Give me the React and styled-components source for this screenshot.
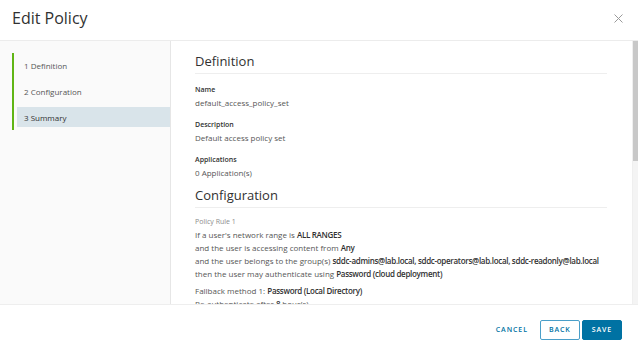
import React from 'react'
import styled, { createGlobalStyle } from 'styled-components'

const GlobalStyle = createGlobalStyle`
  html, body {
    margin: 0;
    padding: 0;
    background: #ffffff;
  }
  body {
    font-family: "Open Sans", "Liberation Sans", sans-serif;
    color: #565656;
  }
`

const Modal = styled.div`
  width: 638px;
  height: 354px;
  display: flex;
  flex-direction: column;
  background: #fff;
  overflow: hidden;
`

const Header = styled.div`
  height: 40px;
  flex: none;
  display: flex;
  align-items: center;
  justify-content: space-between;
  padding: 0 12px 0 12px;
  border-bottom: 1px solid #ececec;
  box-sizing: content-box;
`

const Title = styled.h1`
  margin: 0;
  font-size: 16px;
  font-weight: 400;
  color: #313131;
  line-height: 20px;
  padding-bottom: 4px;
`

const CloseButton = styled.button`
  border: 0;
  background: none;
  padding: 0;
  width: 16px;
  height: 16px;
  display: flex;
  align-items: center;
  justify-content: center;
  margin-bottom: 4px;
  cursor: pointer;
`

const Body = styled.div`
  flex: 1;
  display: flex;
  min-height: 0;
  border-bottom: 1px solid #eeeeee;
`

const Sidebar = styled.nav`
  width: 171px;
  flex: none;
  background: #fafafa;
  border-right: 1px solid #e6e6e6;
  padding-top: 12px;
  padding-left: 12px;
  box-sizing: border-box;
`

const StepList = styled.ul`
  list-style: none;
  margin: 0;
  padding: 2px 0 3px 3px;
  border-left: 2px solid #60b515;
  display: flex;
  flex-direction: column;
  gap: 6px;
`

const Step = styled.li`
  height: 20px;
  display: flex;
  align-items: center;
  padding-left: 7px;
  font-size: 8px;
  color: ${p => (p.$active ? '#313131' : '#565656')};
  background: ${p => (p.$active ? '#d9e4ea' : 'transparent')};
`

const Content = styled.div`
  flex: 1;
  overflow: hidden;
  padding: 11px 25px 0 24px;
`

const SectionTitle = styled.h2`
  margin: ${p => (p.$first ? '0' : '7px')} 0 0 0;
  font-size: 13px;
  line-height: 18px;
  font-weight: 400;
  color: #313131;
  padding-bottom: 3px;
  border-bottom: 1px solid #eeeeee;
`

const Field = styled.div`
  margin-top: ${p => p.$gap || 9}px;
`

const Label = styled.div`
  font-size: 7px;
  line-height: 13px;
  font-weight: 600;
  color: #313131;
`

const Value = styled.div`
  font-size: 8px;
  line-height: 13px;
  color: #565656;
`

const RuleTitle = styled.div`
  margin-top: 7px;
  font-size: 7px;
  line-height: 13px;
  color: #8c8c8c;
`

const Line = styled.div`
  font-size: 8px;
  line-height: 13px;
  color: #565656;
  white-space: nowrap;
  margin-top: ${p => p.$gap || 0}px;

  b {
    font-weight: 600;
    letter-spacing: -0.3px;
    color: #313131;
  }
`

const ScrollTrack = styled.div`
  width: 6px;
  flex: none;
  background: #f4f4f4;
  border-left: 1px solid #efefef;
  box-sizing: border-box;
`

const ScrollThumb = styled.div`
  height: 120px;
  background: #c8c8c8;
`

const Footer = styled.div`
  flex: none;
  height: 49px;
  display: flex;
  align-items: center;
  justify-content: flex-end;
  padding-right: 16px;
  gap: 2px;
`

const Button = styled.button`
  height: 20px;
  padding: 0 ${p => p.$pad || 9}px;
  margin-right: ${p => p.$after || 0}px;
  font-family: "Open Sans", "Liberation Sans", sans-serif;
  font-size: 7px;
  font-weight: 600;
  letter-spacing: 0.9px;
  border-radius: 2px;
  cursor: pointer;
  border: 1px solid ${p => (p.$variant === 'flat' ? 'transparent' : '#0072a3')};
  color: ${p => (p.$variant === 'primary' ? '#ffffff' : '#0072a3')};
  background: ${p => (p.$variant === 'primary' ? '#0072a3' : '#ffffff')};
  ${p => p.$variant === 'outline' && 'border-color: #4a9fc9;'}
`

const steps = ['1 Definition', '2 Configuration', '3 Summary']

export default function App() {
  return (
    <>
      <GlobalStyle />
      <Modal>
        <Header>
          <Title>Edit Policy</Title>
          <CloseButton aria-label="Close">
            <svg width="9" height="9" viewBox="0 0 9 9">
              <path d="M0.5 0.5 L8.5 8.5 M8.5 0.5 L0.5 8.5" stroke="#9a9a9a" strokeWidth="1" fill="none" />
            </svg>
          </CloseButton>
        </Header>
        <Body>
          <Sidebar>
            <StepList>
              {steps.map((s, i) => (
                <Step key={s} $active={i === 2}>{s}</Step>
              ))}
            </StepList>
          </Sidebar>
          <Content>
            <SectionTitle $first>Definition</SectionTitle>
            <Field $gap={9}>
              <Label>Name</Label>
              <Value>default_access_policy_set</Value>
            </Field>
            <Field>
              <Label>Description</Label>
              <Value>Default access policy set</Value>
            </Field>
            <Field>
              <Label>Applications</Label>
              <Value>0 Application(s)</Value>
            </Field>
            <SectionTitle>Configuration</SectionTitle>
            <RuleTitle>Policy Rule 1</RuleTitle>
            <Line>If a user's network range is <b>ALL RANGES</b></Line>
            <Line>and the user is accessing content from <b>Any</b></Line>
            <Line>and the user belongs to the group(s) <b>sddc-admins@lab.local, sddc-operators@lab.local, sddc-readonly@lab.local</b></Line>
            <Line>then the user may authenticate using <b>Password (cloud deployment)</b></Line>
            <Line $gap={4}>Fallback method 1: <b>Password (Local Directory)</b></Line>
            <Line>Re-authenticate after <b>8</b> hour(s)</Line>
          </Content>
          <ScrollTrack>
            <ScrollThumb />
          </ScrollTrack>
        </Body>
        <Footer>
          <Button $variant="flat" $pad={6} $after={3}>CANCEL</Button>
          <Button $variant="outline" $pad={8}>BACK</Button>
          <Button $variant="primary">SAVE</Button>
        </Footer>
      </Modal>
    </>
  )
}
